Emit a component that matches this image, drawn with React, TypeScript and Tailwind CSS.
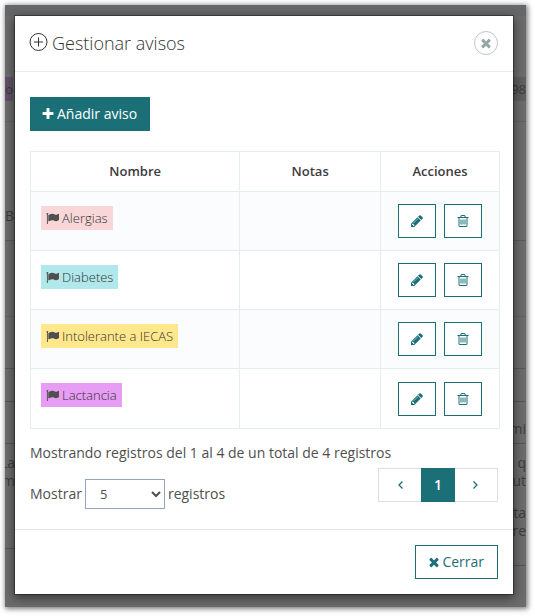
import React from "react";

const avisos = [
  { nombre: "Alergias", color: "bg-[#f9d6d8]" },
  { nombre: "Diabetes", color: "bg-[#b0e8ec]" },
  { nombre: "Intolerante a IECAS", color: "bg-[#ffe88c]" },
  { nombre: "Lactancia", color: "bg-[#e89df5]" },
];

const icons = {
  plus: "M1600 736v192q0 40-28 68t-68 28h-416v416q0 40-28 68t-68 28h-192q-40 0-68-28t-28-68v-416h-416q-40 0-68-28t-28-68v-192q0-40 28-68t68-28h416v-416q0-40 28-68t68-28h192q40 0 68 28t28 68v416h416q40 0 68 28t28 68z",
  times:
    "M1490 1322q0 40-28 68l-136 136q-28 28-68 28t-68-28l-294-294-294 294q-28 28-68 28t-68-28l-136-136q-28-28-28-68t28-68l294-294-294-294q-28-28-28-68t28-68l136-136q28-28 68-28t68 28l294 294 294-294q28-28 68-28t68 28l136 136q28 28 28 68t-28 68l-294 294 294 294q28 28 28 68z",
  flag: "M320 256q0 72-64 110v1266q0 13-9.5 22.5t-22.5 9.5h-64q-13 0-22.5-9.5t-9.5-22.5v-1266q-64-38-64-110 0-53 37.5-90.5t90.5-37.5 90.5 37.5 37.5 90.5zm1472 64v763q0 25-12.5 38.5t-39.5 27.5q-215 116-369 116-61 0-123.5-22t-108.5-48-115.5-48-142.5-22q-192 0-464 146-17 9-33 9-26 0-45-19t-19-45v-742q0-32 31-55 21-14 79-43 236-120 421-120 107 0 200 29t219 88q38 19 88 19 54 0 117.5-21t110-47 88-47 54.5-21q26 0 45 19t19 45z",
  pencil:
    "M491 1536l91-91-235-235-91 91v107h128v128h107zm523-928q0-22-22-22-10 0-17 7l-542 542q-7 7-7 17 0 22 22 22 10 0 17-7l542-542q7-7 7-17zm-54-192l416 416-832 832h-416v-416zm683 96q0 53-37 90l-166 166-416-416 166-165q36-38 90-38 53 0 91 38l235 234q37 39 37 91z",
  trash:
    "M704 736v576q0 14-9 23t-23 9h-64q-14 0-23-9t-9-23v-576q0-14 9-23t23-9h64q14 0 23 9t9 23zm256 0v576q0 14-9 23t-23 9h-64q-14 0-23-9t-9-23v-576q0-14 9-23t23-9h64q14 0 23 9t9 23zm256 0v576q0 14-9 23t-23 9h-64q-14 0-23-9t-9-23v-576q0-14 9-23t23-9h64q14 0 23 9t9 23zm128 724v-948h-896v948q0 22 7 40.5t14.5 27 10.5 8.5h832q3 0 10.5-8.5t14.5-27 7-40.5zm-672-1076h448l-48-117q-7-9-17-11h-317q-10 2-17 11zm928 32v64q0 14-9 23t-23 9h-96v948q0 83-47 143.5t-113 60.5h-832q-66 0-113-58.5t-47-141.5v-952h-96q-14 0-23-9t-9-23v-64q0-14 9-23t23-9h309l70-167q15-37 54-63t79-26h320q40 0 79 26t54 63l70 167h309q14 0 23 9t9 23z",
};

const Icon = ({
  name,
  className,
}: {
  name: keyof typeof icons;
  className: string;
}) => (
  <svg
    viewBox="0 0 1792 1792"
    fill="currentColor"
    aria-hidden="true"
    className={className}
  >
    <path d={icons[name]} />
  </svg>
);

// Page behind the dialog, only its edges stay visible
const Background = () => (
  <div
    aria-hidden="true"
    className="col-start-1 row-start-1 flex justify-between overflow-hidden border-t-[11px] border-[#66686a] bg-[#6c6c6c] text-sm leading-[18px] text-[#3c3c3c]"
  >
    <div className="flex w-[10px] flex-col whitespace-nowrap">
      <div className="h-[61px]" />
      <div className="flex h-6 w-2 items-center justify-end bg-[#63526a] text-[13px]">
        o
      </div>
      <div className="h-[21px] border-b border-[#626262]" />
      <div className="h-[119px] border-b border-[#5a5d66] pt-[85px]">Bo</div>
      <div className="h-[76px] border-b border-[#626262]" />
      <div className="h-[52px] border-b border-[#555862]" />
      <div className="h-[33px] border-b border-[#555555]" />
      <div className="h-[42px] border-b border-[#555555]" />
      <div className="flex h-[105px] flex-col items-end border-b border-[#555555] pt-[10px]">
        <span>La</span>
        <span>m</span>
      </div>
    </div>
    <div className="flex w-[13px] flex-col whitespace-nowrap">
      <div className="h-[61px]" />
      <div className="flex h-6 items-center justify-end bg-[#606060] text-[13px]">
        98
      </div>
      <div className="h-[21px] border-b border-[#626262]" />
      <div className="h-[119px] border-b border-[#5a5d66]" />
      <div className="h-[76px] border-b border-[#626262]" />
      <div className="h-[52px] border-b border-[#555862]" />
      <div className="h-[33px] border-b border-[#555555]" />
      <div className="flex h-[42px] items-center justify-end border-b border-[#555555] pt-3">
        mi
      </div>
      <div className="flex h-[122px] flex-col items-end border-b border-[#555555] pt-[10px]">
        <span>q</span>
        <span>ut</span>
        <span className="mt-[14px]">ta</span>
        <span>re</span>
      </div>
    </div>
  </div>
);

const AvisosTable = () => (
  <div className="-mr-0.5 mt-5">
    <table className="w-full table-fixed border-collapse border border-[#e7ecf1] text-[13px]">
      <thead>
        <tr className="h-10 text-[#3c3c3c]">
          <th className="border border-[#e7ecf1] font-semibold">Nombre</th>
          <th className="w-[30%] border border-[#e7ecf1] font-semibold">
            Notas
          </th>
          <th className="w-[119px] border border-[#e7ecf1] font-semibold">
            Acciones
          </th>
        </tr>
      </thead>
      <tbody>
        {avisos.map((aviso) => (
          <tr
            key={aviso.nombre}
            className="h-[59px] last:h-[60px] odd:bg-[#fbfcfd]"
          >
            <td className="border border-[#e7ecf1] px-[10px] pt-[14px] align-top">
              <span
                className={`inline-flex h-6 items-center gap-[3px] px-[5px] font-light text-[#333333] ${aviso.color}`}
              >
                <Icon name="flag" className="size-[13px] text-[#4f4f4f]" />
                {aviso.nombre}
              </span>
            </td>
            <td className="border border-[#e7ecf1]" />
            <td className="border border-[#e7ecf1]">
              <div className="flex justify-center gap-2">
                <button
                  type="button"
                  aria-label={`Editar ${aviso.nombre}`}
                  className="flex h-[34px] w-[38px] items-center justify-center border border-[#1b7078] bg-white text-[#1b7078]"
                >
                  <Icon name="pencil" className="size-[14px]" />
                </button>
                <button
                  type="button"
                  aria-label={`Eliminar ${aviso.nombre}`}
                  className="flex h-[34px] w-[38px] items-center justify-center border border-[#1b7078] bg-white text-[#1b7078]"
                >
                  <Icon name="trash" className="size-[14px]" />
                </button>
              </div>
            </td>
          </tr>
        ))}
      </tbody>
    </table>
  </div>
);

const Pagination = () => (
  <nav
    aria-label="Paginación"
    className="flex h-[34px] border border-[#dddddd] text-[#1b7078]"
  >
    <button
      type="button"
      aria-label="Anterior"
      className="flex w-[42px] items-center justify-center pl-0.5"
    >
      <svg
        viewBox="0 0 8 10"
        className="h-[10px] w-2"
        fill="none"
        stroke="currentColor"
        strokeWidth="1.3"
      >
        <path d="M5.5 1.5L2 5l3.5 3.5" />
      </svg>
    </button>
    <button
      type="button"
      aria-current="page"
      className="-my-px w-[34px] bg-[#1b7078] font-semibold text-white"
    >
      1
    </button>
    <button
      type="button"
      aria-label="Siguiente"
      className="flex w-[42px] items-center justify-center pr-0.5"
    >
      <svg
        viewBox="0 0 8 10"
        className="h-[10px] w-2"
        fill="none"
        stroke="currentColor"
        strokeWidth="1.3"
      >
        <path d="M2.5 1.5L6 5l-3.5 3.5" />
      </svg>
    </button>
  </nav>
);

const App = () => {
  return (
    <div className="min-h-screen bg-white pt-[5px] pr-[9px] pb-[9px] pl-[5px] font-['Open_Sans',sans-serif] text-sm text-[#4f4f4f]">
      <div className="grid shadow-[1px_1px_5px_1px_rgba(0,0,0,0.5)]">
        <Background />
        <div
          role="dialog"
          aria-labelledby="titulo"
          className="relative col-start-1 row-start-1 mt-[11px] mr-[13px] mb-[13px] ml-[10px] bg-white shadow-[0_3px_10px_1px_rgba(0,0,0,0.5),0_0_0_1px_rgba(0,0,0,0.35)]"
        >
          <header className="flex h-14 items-center justify-between border-b border-[#ebebeb] pr-[15px] pb-0.5 pl-[14px]">
            <h1
              id="titulo"
              className="flex items-center gap-[3px] text-lg font-light text-[#333333]"
            >
              <svg
                viewBox="0 0 20 20"
                className="size-5"
                fill="none"
                stroke="currentColor"
                aria-hidden="true"
              >
                <circle cx="9.5" cy="9" r="8.5" />
                <path d="M9.5 4.5v9M5 9h9" />
              </svg>
              Gestionar avisos
            </h1>
            <button
              type="button"
              aria-label="Cerrar ventana"
              className="flex size-6 items-center justify-center rounded-full border border-[#c0c5c5] text-[#95a5a6]"
            >
              <Icon name="times" className="size-[14px]" />
            </button>
          </header>

          <div className="px-[15px] pt-[25px] pb-5">
            <button
              type="button"
              className="flex h-[34px] items-center gap-0.5 bg-[#1b7078] pr-[13px] pl-[11px] text-white"
            >
              <Icon name="plus" className="size-[14px]" />
              Añadir aviso
            </button>
            <AvisosTable />
            <p className="mt-[14px]">
              Mostrando registros del 1 al 4 de un total de 4 registros
            </p>
            <div className="mt-[5px] flex items-start justify-between">
              <label className="mt-[11px] flex items-center gap-[3px]">
                Mostrar
                <select
                  defaultValue="5"
                  className="h-[30px] w-20 border border-[#95a5bf] bg-white pl-[10px] text-[13px]"
                >
                  <option>5</option>
                  <option>10</option>
                  <option>20</option>
                </select>
                registros
              </label>
              <Pagination />
            </div>
          </div>

          <footer className="flex justify-end border-t border-[#e5e5e5] p-[15px]">
            <button
              type="button"
              className="flex h-[34px] items-center gap-px border border-[#1b7078] pr-[13px] pl-[11px] text-[#1b7078]"
            >
              <Icon name="times" className="size-[14px]" />
              Cerrar
            </button>
          </footer>
        </div>
      </div>
    </div>
  );
};

export default App;
